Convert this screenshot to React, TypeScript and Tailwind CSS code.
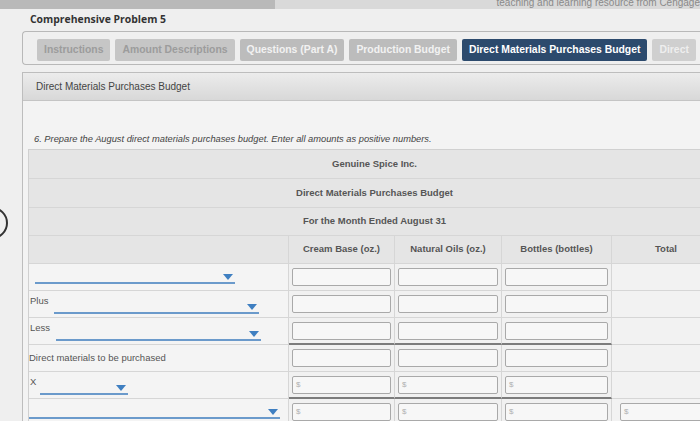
import React from 'react';

const tabs = [
    { label: 'Instructions', cls: 'bg-[#c6c6c6] text-[#9c9c9c]' },
    { label: 'Amount Descriptions', cls: 'bg-[#c6c6c6] text-[#9c9c9c]' },
    { label: 'Questions (Part A)', cls: 'bg-[#bcbcbc] text-[#f2f2f2]' },
    { label: 'Production Budget', cls: 'bg-[#bcbcbc] text-[#f2f2f2]' },
    { label: 'Direct Materials Purchases Budget', cls: 'bg-[#2c4a6d] text-white' },
    { label: 'Direct', cls: 'bg-[#cfcfcf] text-[#eeeeee]' },
];

const Caret = () => (
    <svg width="10" height="6" viewBox="0 0 10 6" className="shrink-0 mb-[2px]">
        <path d="M0 0 L10 0 L5 6 Z" fill="#3f7fc1" />
    </svg>
);

const Select = ({ w }: { w: string }) => (
    <div className={`flex items-end justify-end border-b-2 border-[#6b9acb] h-[14px] pr-[2px] ${w}`}>
        <Caret />
    </div>
);

const Input = ({ dollar }: { dollar?: boolean }) => (
    <div className="h-[18px] mx-[3px] border border-[#a9a9a9] rounded-[2px] bg-[#f7f7f7] flex items-center pl-[3px] text-[8px] text-[#b0b0b0]">
        {dollar ? '$' : ''}
    </div>
);

const cell = "border-r border-b border-[#d6d6d6] flex items-center";

type Row = { label: React.ReactNode; dollar?: boolean; total?: boolean; sumLine?: boolean };

const rows: Row[] = [
    { label: <div className="pl-[6px]"><Select w="w-[200px]" /></div> },
    { label: <div className="flex items-end pl-[1px] gap-[6px]"><span className="mb-[6px]">Plus</span><Select w="w-[205px]" /></div> },
    { label: <div className="flex items-end pl-[1px] gap-[6px]"><span className="mb-[6px]">Less</span><Select w="w-[205px]" /></div>, sumLine: true },
    { label: <span>Direct materials to be purchased</span> },
    { label: <div className="flex items-end pl-[1px] gap-[4px]"><span className="mb-[5px]">X</span><Select w="w-[88px]" /></div>, dollar: true, sumLine: true },
    { label: <div className="pr-[8px] w-full"><Select w="w-full" /></div>, dollar: true, total: true },
];

export default function App() {
    return (
        <div className="w-[700px] h-[421px] overflow-hidden bg-[#efefef] flex flex-col" style={{ fontFamily: '"Liberation Sans", Arial, sans-serif' }}>
            <div className="h-[9px] shrink-0 flex overflow-hidden">
                <div className="w-[275px] bg-[#b9b9b9]" />
                <div className="flex-1 bg-[#d9d9d9] flex justify-end overflow-hidden">
                    <span className="text-[10px] text-[#8a8a8a] leading-none -mt-[2px] whitespace-nowrap">teaching and learning resource from Cengage</span>
                </div>
            </div>
            <div className="flex flex-1 min-h-0">
                <div className="w-[22px] shrink-0 relative">
                    <div className="absolute left-[-24px] top-[198px] w-[32px] h-[32px] rounded-full border-[2px] border-[#333]" />
                </div>
                <div className="flex-1 min-w-0 flex flex-col">
                    <div className="h-[20px] shrink-0 flex items-end pl-[8px] pb-[1px] text-[10.4px] font-bold text-[#333]" style={{ fontFamily: '"Open Sans", sans-serif' }}>
                        Comprehensive Problem 5
                    </div>
                    <div className="shrink-0 border border-r-0 border-[#b8b8b8] rounded-l-[4px] mt-[2px] pl-[14px] pt-[7px] pb-[3px] flex gap-[5px] overflow-hidden whitespace-nowrap">
                        {tabs.map(t => (
                            <div key={t.label} className={`h-[22px] px-[7px] flex items-center rounded-[2px] text-[10.4px] font-bold shrink-0 ${t.cls}`}>{t.label}</div>
                        ))}
                    </div>
                    <div className="mt-[7px] border-l border-t border-[#bdbdbd] flex-1 min-h-0 overflow-hidden flex flex-col">
                        <div className="h-[28px] shrink-0 bg-gradient-to-b from-[#ececec] to-[#d8d8d8] border-b border-[#c4c4c4] flex items-center pl-[13px] text-[10px] text-[#444]">
                            Direct Materials Purchases Budget
                        </div>
                        <div className="bg-[#f3f3f3] flex-1 flex flex-col">
                            <div className="shrink-0 pl-[11px] pt-[34px] h-[48px] text-[9.3px] leading-none italic text-[#444] whitespace-nowrap">
                                6. Prepare the August direct materials purchases budget. Enter all amounts as positive numbers.
                            </div>
                            <div className="shrink-0 ml-[5px] w-[692px] border-l border-t border-[#d0d0d0] text-[9.5px] text-[#555]">
                                <div className="grid grid-cols-[260px_106px_107px_110px_109px] bg-[#e5e5e5] font-bold">
                                    <div className={`${cell} col-span-5 justify-center h-[29px]`}>Genuine Spice Inc.</div>
                                    <div className={`${cell} col-span-5 justify-center h-[29px]`}>Direct Materials Purchases Budget</div>
                                    <div className={`${cell} col-span-5 justify-center h-[28px]`}>For the Month Ended August 31</div>
                                    <div className={`${cell} h-[28px]`} />
                                    <div className={`${cell} justify-center h-[28px]`}>Cream Base (oz.)</div>
                                    <div className={`${cell} justify-center h-[28px]`}>Natural Oils (oz.)</div>
                                    <div className={`${cell} justify-center h-[28px]`}>Bottles (bottles)</div>
                                    <div className={`${cell} justify-center h-[28px]`}>Total</div>
                                </div>
                                {rows.map((r, i) => (
                                    <div key={i} className="grid grid-cols-[260px_106px_107px_110px_109px] h-[27px]">
                                        <div className={`${cell} bg-[#f4f4f4] text-[#555] font-normal`}>{r.label}</div>
                                        {[0, 1, 2].map(c => (
                                            <div key={c} className={`border-r border-[#d6d6d6] bg-[#f1f1f1] flex flex-col justify-center ${r.sumLine ? 'border-b-2 border-b-[#7c7c7c]' : 'border-b'}`}>
                                                <Input dollar={r.dollar} />
                                            </div>
                                        ))}
                                        <div className={`${cell} bg-[#f2f2f2] flex-col justify-center items-stretch`}>
                                            {r.total && <div className="pl-[5px]"><Input dollar /></div>}
                                        </div>
                                    </div>
                                ))}
                            </div>
                        </div>
                    </div>
                </div>
            </div>
        </div>
    );
}
